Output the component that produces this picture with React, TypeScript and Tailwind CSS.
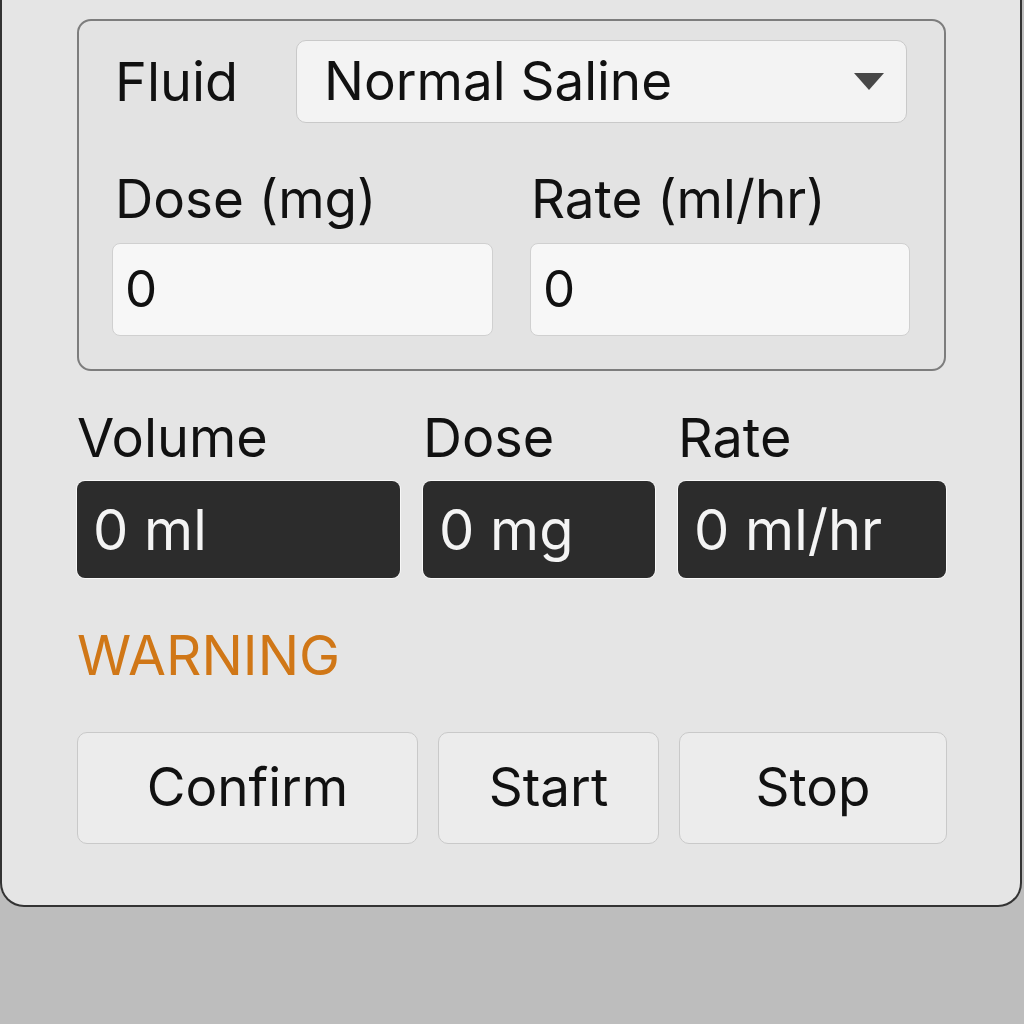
const font = "[font-family:Inter,'Noto_Sans',sans-serif]";

function Readout({ label, value, width }: { label: string; value: string; width: string }) {
  return (
    <div className={`flex flex-col ${width}`}>
      <div className="h-[62px] text-[54px] leading-[62px] text-[#111]">{label}</div>
      <div className="mt-[12px] flex h-[97px] items-center rounded-[8px] bg-[#2c2c2c] pl-[16px] text-[56px] text-[#f4f4f4] ring-1 ring-[#f8f8f8]">
        {value}
      </div>
    </div>
  );
}

function Btn({ label, width }: { label: string; width: string }) {
  return (
    <button className={`flex h-[112px] items-center justify-center rounded-[10px] border border-[#c9c9c9] bg-[#ececec] text-[53px] text-[#111] ${width}`}>
      {label}
    </button>
  );
}

export default function App() {
  return (
    <div className={`h-[1024px] w-[1024px] overflow-hidden bg-[#bdbdbd] ${font}`}>
      <div className="h-[907px] w-[1022px] rounded-b-[24px] border-x-2 border-b-2 border-[#333] bg-[#e5e5e5] pl-[75px] pt-[19px]">
        {/* Bedieningsgroep */}
        <div className="h-[352px] w-[869px] rounded-[14px] border-2 border-[#7d7d7d] bg-[#e3e3e3] pl-[33px] pt-[19px]">
          <div className="flex items-center">
            <div className="w-[184px] pl-[3px] text-[54px] text-[#111]">Fluid</div>
            <div className="flex h-[83px] w-[611px] items-center justify-between rounded-[10px] border border-[#c9c9c9] bg-[#f3f3f3] pl-[27px] pr-[22px] text-[53px] text-[#111]">
              <span>Normal Saline</span>
              <svg width="30" height="17" viewBox="0 0 30 17">
                <path d="M0 0 L30 0 L15 17 Z" fill="#474747" />
              </svg>
            </div>
          </div>
          <div className="mt-[46px] flex gap-[37px]">
            <div className="flex w-[381px] flex-col">
              <div className="h-[60px] pl-[3px] text-[53px] leading-[60px] text-[#111]">Dose (mg)</div>
              <div className="mt-[14px] flex h-[93px] items-center rounded-[8px] border border-[#d0d0d0] bg-[#f7f7f7] pl-[12px] text-[51px] text-[#111]">
                0
              </div>
            </div>
            <div className="flex w-[380px] flex-col">
              <div className="h-[60px] pl-[1px] text-[53px] leading-[60px] text-[#111]">Rate (ml/hr)</div>
              <div className="mt-[14px] flex h-[93px] items-center rounded-[8px] border border-[#d0d0d0] bg-[#f7f7f7] pl-[12px] text-[51px] text-[#111]">
                0
              </div>
            </div>
          </div>
        </div>

        {/* Uitlezing */}
        <div className="mt-[36px] flex gap-[23px]">
          <Readout label="Volume" value="0 ml" width="w-[323px]" />
          <Readout label="Dose" value="0 mg" width="w-[232px]" />
          <Readout label="Rate" value="0 ml/hr" width="w-[268px]" />
        </div>

        <div className="mt-[44px] h-[66px] text-[55px] leading-[66px] text-[#d07717]">WARNING</div>

        <div className="mt-[44px] flex gap-[20px]">
          <Btn label="Confirm" width="w-[341px]" />
          <Btn label="Start" width="w-[221px]" />
          <Btn label="Stop" width="w-[268px]" />
        </div>
      </div>
    </div>
  );
}
